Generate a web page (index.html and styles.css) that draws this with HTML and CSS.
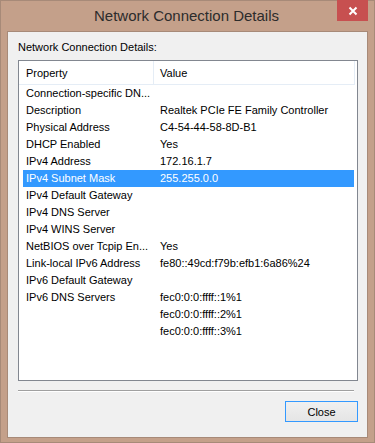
FILE: index.html
```html
<!DOCTYPE html>
<html>
<head>
<meta charset="utf-8">
<link rel="stylesheet" href="styles.css">
</head>
<body>
<div class="window">
  <div class="titlebar">
    <div class="title">Network Connection Details</div>
    <div class="close-x">
      <svg width="10" height="10" viewBox="0 0 10 10"><path d="M1.5 1.5 L8.5 8.5 M8.5 1.5 L1.5 8.5" stroke="#fff" stroke-width="2" fill="none"/></svg>
    </div>
  </div>
  <div class="client">
    <div class="label">Network Connection Details:</div>
    <div class="listview">
      <div class="header">
        <div class="hcell hprop">Property</div>
        <div class="hcell hval">Value</div>
      </div>
      <div class="rows">
        <div class="row"><span>Connection-specific DN...</span><span></span></div>
        <div class="row"><span>Description</span><span>Realtek PCIe FE Family Controller</span></div>
        <div class="row"><span>Physical Address</span><span>C4-54-44-58-8D-B1</span></div>
        <div class="row"><span>DHCP Enabled</span><span>Yes</span></div>
        <div class="row"><span>IPv4 Address</span><span>172.16.1.7</span></div>
        <div class="row selected"><span>IPv4 Subnet Mask</span><span>255.255.0.0</span></div>
        <div class="row"><span>IPv4 Default Gateway</span><span></span></div>
        <div class="row"><span>IPv4 DNS Server</span><span></span></div>
        <div class="row"><span>IPv4 WINS Server</span><span></span></div>
        <div class="row"><span>NetBIOS over Tcpip En...</span><span>Yes</span></div>
        <div class="row"><span>Link-local IPv6 Address</span><span>fe80::49cd:f79b:efb1:6a86%24</span></div>
        <div class="row"><span>IPv6 Default Gateway</span><span></span></div>
        <div class="row"><span>IPv6 DNS Servers</span><span>fec0:0:0:ffff::1%1</span></div>
        <div class="row"><span></span><span>fec0:0:0:ffff::2%1</span></div>
        <div class="row"><span></span><span>fec0:0:0:ffff::3%1</span></div>
      </div>
    </div>
    <div class="separator"></div>
    <div class="buttons">
      <button class="btn">Close</button>
    </div>
  </div>
</div>
</body>
</html>
```

FILE: styles.css
```css
html, body {
  margin: 0;
  padding: 0;
}
body {
  width: 375px;
  height: 443px;
  overflow: hidden;
  background: #c4a08a;
  font-family: "Liberation Sans", Arial, sans-serif;
}
.window {
  box-sizing: border-box;
  width: 375px;
  height: 443px;
  border: 1px solid #a78a78;
  background: #c4a08a;
  display: flex;
  flex-direction: column;
  position: relative;
}
.titlebar {
  height: 30px;
  display: flex;
  align-items: center;
  justify-content: center;
}
.title {
  font-size: 15px;
  color: #2c2c2c;
  margin-top: -2px;
  margin-left: -2px;
}
.close-x {
  position: absolute;
  top: -1px;
  right: 6px;
  width: 31px;
  height: 21px;
  background: #c75050;
  display: flex;
  align-items: center;
  justify-content: center;
}
.client {
  box-sizing: border-box;
  margin: 0 6px 0 6px;
  height: 407px;
  background: #f0f0f0;
  border: 1px solid #a78a78;
  display: flex;
  flex-direction: column;
  padding: 0 9px 0 10px;
}
.label {
  font-size: 11px;
  line-height: 13px;
  color: #000;
  margin-top: 9px;
  margin-left: 0;
}
.listview {
  box-sizing: border-box;
  margin-top: 6px;
  width: 340px;
  height: 321px;
  border: 1px solid #828790;
  background: #fff;
  display: flex;
  flex-direction: column;
}
.header {
  display: flex;
  height: 23px;
  border-bottom: 1px solid #e5edf6;
  border-right: 1px solid #e5edf6;
  margin-right: 2px;
  font-size: 11px;
  color: #000;
}
.hcell {
  box-sizing: border-box;
  display: flex;
  align-items: center;
  padding-top: 1px;
}
.hprop {
  width: 135px;
  padding-left: 7px;
  border-right: 1px solid #e5edf6;
}
.hval {
  flex: 1;
  padding-left: 6px;
}
.rows {
  display: flex;
  flex-direction: column;
}
.row {
  display: grid;
  grid-template-columns: 134px 1fr;
  height: 17px;
  line-height: 17px;
  margin: 0 3px 0 4px;
  padding-left: 3px;
  font-size: 11px;
  color: #000;
  white-space: nowrap;
}
.row.selected {
  background: #3399ff;
  color: #fff;
}
.separator {
  margin-top: 9px;
  width: 336px;
  height: 1px;
  background: #a0a0a0;
  border-bottom: 1px solid #ffffff;
}
.buttons {
  display: flex;
  justify-content: flex-end;
  margin-top: 9px;
}
.btn {
  box-sizing: border-box;
  width: 73px;
  height: 21px;
  border: 1px solid #3399ff;
  background: linear-gradient(#f0f0f0, #e5e5e5);
  font-family: "Liberation Sans", Arial, sans-serif;
  font-size: 11px;
  color: #000;
  padding: 0;
  margin: 0;
}
```
